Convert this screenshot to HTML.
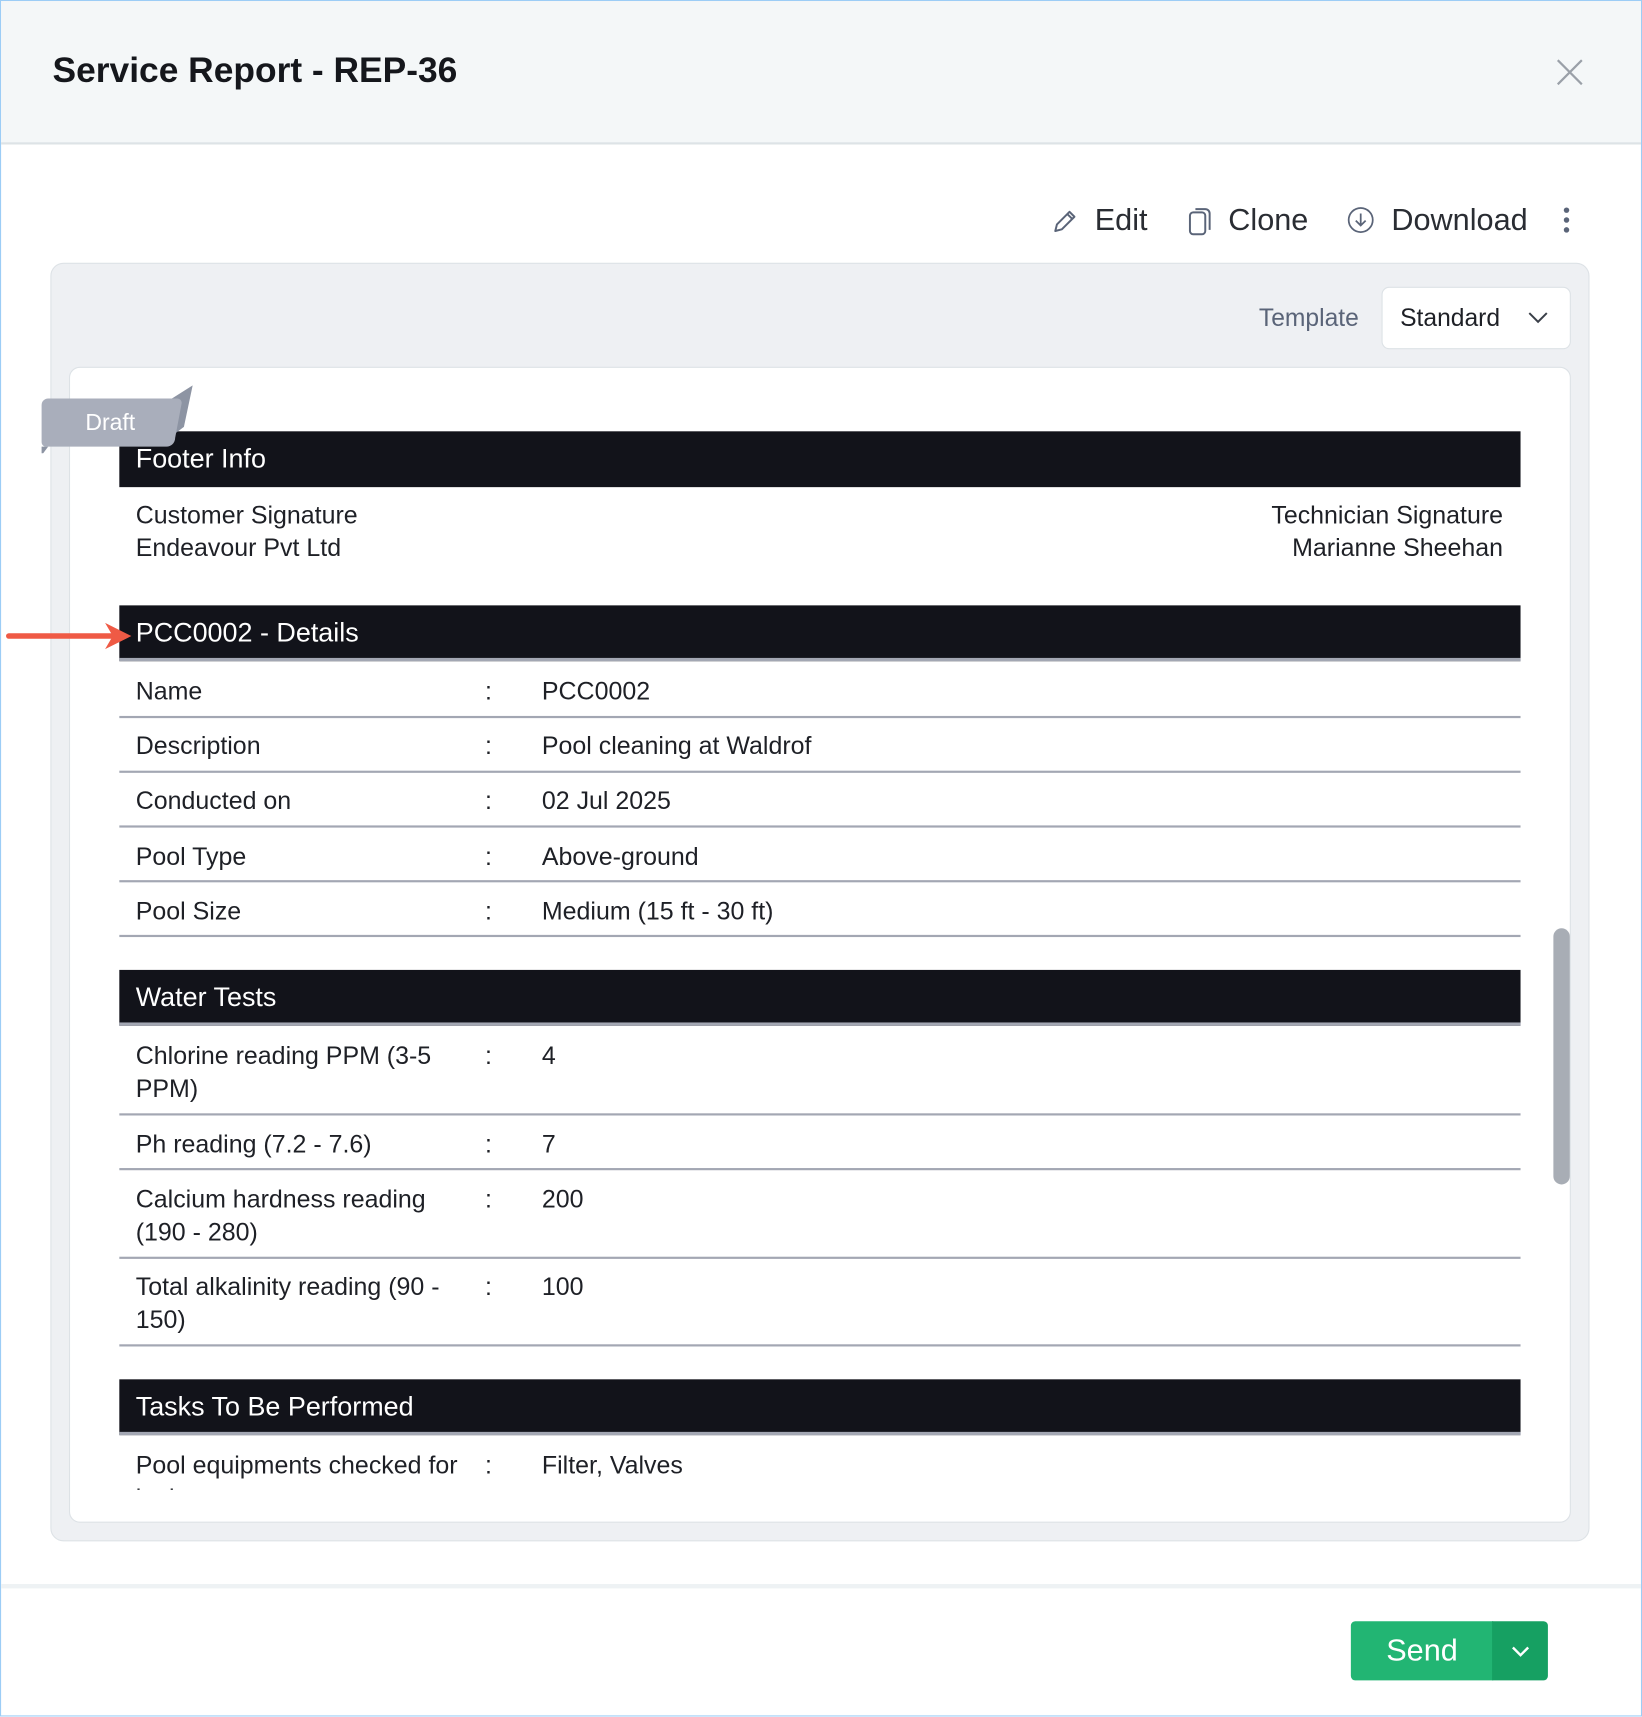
<!DOCTYPE html>
<html><head><meta charset="utf-8"><style>
html,body{margin:0;padding:0;width:1642px;height:1716px;overflow:hidden;background:#fff;font-family:"Liberation Sans",sans-serif;}
#s{position:absolute;left:0;top:0;width:1500px;height:1568px;transform:scale(1.0947);transform-origin:0 0;}
.a{position:absolute;}
.frame{left:0;top:0;width:1498px;height:1566px;border:1px solid #9ccdf6;}
.hdr{left:1px;top:1px;width:1498px;height:129px;background:#f4f7f8;border-bottom:2px solid #dde3e6;}
.title{left:48px;top:46px;font-size:32.3px;font-weight:bold;color:#15171c;}
.act{top:185px;font-size:28px;color:#2a2d33;}
.panel{left:46px;top:240px;width:1404px;height:1166px;background:#eef0f3;border:1px solid #dde2e6;border-radius:12px;}
.card{left:63px;top:335px;width:1370px;height:1054px;background:#fff;border:1px solid #dde2e6;border-radius:10px;}
.clip{left:64px;top:336px;width:1370px;height:1025px;overflow:hidden;}
.bar{position:absolute;left:45px;width:1280px;height:51px;background:#12131a;color:#fff;font-size:24.6px;line-height:51px;text-indent:15px;border-bottom:3px solid #a3a7b3;box-sizing:border-box;}
.t{position:absolute;font-size:22.8px;color:#1e2026;line-height:30px;}
.ln{position:absolute;left:45px;width:1280px;height:2px;background:#a3a7b3;}
</style></head><body><div id="s">
<div class="a frame"></div>
<div class="a hdr"></div>
<div class="a title">Service Report - REP-36</div>
<svg class="a" style="left:1420px;top:52px" width="28" height="28" viewBox="0 0 28 28"><path d="M3 3L25 25M25 3L3 25" stroke="#9aa0a8" stroke-width="2"/></svg>

<svg class="a" style="left:960px;top:189px" width="26" height="26" viewBox="0 0 26 26"><path d="M4 22l1.5-6L17 4.5l4.5 4.5L10 20.5z M15 6.5l4.5 4.5" fill="none" stroke="#5a6478" stroke-width="1.8" stroke-linejoin="round"/></svg>
<div class="a act" style="left:1000px">Edit</div>
<svg class="a" style="left:1084px;top:187px" width="26" height="30" viewBox="0 0 26 30"><rect x="3" y="7" width="14" height="20" rx="3" fill="none" stroke="#5a6478" stroke-width="1.8"/><path d="M8 4h9a4 4 0 0 1 4 4v15" fill="none" stroke="#5a6478" stroke-width="1.8"/></svg>
<div class="a act" style="left:1122px">Clone</div>
<svg class="a" style="left:1230px;top:188px" width="26" height="26" viewBox="0 0 26 26"><circle cx="13" cy="13" r="11" fill="none" stroke="#5a6478" stroke-width="1.6"/><path d="M13 7v11M8.5 13.5L13 18l4.5-4.5" fill="none" stroke="#5a6478" stroke-width="1.6"/></svg>
<div class="a act" style="left:1271px">Download</div>
<svg class="a" style="left:1425px;top:188px" width="12" height="28"><circle cx="6" cy="4" r="2.5" fill="#5a6478"/><circle cx="6" cy="13" r="2.5" fill="#5a6478"/><circle cx="6" cy="22" r="2.5" fill="#5a6478"/></svg>

<div class="a panel"></div>
<div class="a" style="left:1150px;top:278px;font-size:22.5px;color:#5a6478">Template</div>
<div class="a" style="left:1262px;top:262px;width:171px;height:55px;background:#fff;border:1px solid #dde2e6;border-radius:7px;"></div>
<div class="a" style="left:1279px;top:278px;font-size:22.5px;color:#1e2026">Standard</div>
<svg class="a" style="left:1395px;top:283px" width="20" height="14"><path d="M2 3l8 8 8-8" fill="none" stroke="#3a3f48" stroke-width="1.8"/></svg>

<div class="a card"></div>
<div class="a clip">
 <div class="bar" style="top:58px;border-bottom:none">Footer Info</div>
 <div class="t" style="left:60px;top:119px">Customer Signature<br>Endeavour Pvt Ltd</div>
 <div class="t" style="right:61px;top:119px;text-align:right">Technician Signature<br>Marianne Sheehan</div>

 <div class="bar" style="top:217px">PCC0002 - Details</div>
 <div class="t" style="left:60px;top:280px">Name</div><div class="t" style="left:379px;top:280px">:</div><div class="t" style="left:431px;top:280px">PCC0002</div><div class="ln" style="top:318px"></div>
 <div class="t" style="left:60px;top:330px">Description</div><div class="t" style="left:379px;top:330px">:</div><div class="t" style="left:431px;top:330px">Pool cleaning at Waldrof</div><div class="ln" style="top:368px"></div>
 <div class="t" style="left:60px;top:380px">Conducted on</div><div class="t" style="left:379px;top:380px">:</div><div class="t" style="left:431px;top:380px">02 Jul 2025</div><div class="ln" style="top:418px"></div>
 <div class="t" style="left:60px;top:431px">Pool Type</div><div class="t" style="left:379px;top:431px">:</div><div class="t" style="left:431px;top:431px">Above-ground</div><div class="ln" style="top:468px"></div>
 <div class="t" style="left:60px;top:481px">Pool Size</div><div class="t" style="left:379px;top:481px">:</div><div class="t" style="left:431px;top:481px">Medium (15 ft - 30 ft)</div><div class="ln" style="top:518px"></div>

 <div class="bar" style="top:550px">Water Tests</div>
 <div class="t" style="left:60px;top:613px">Chlorine reading PPM (3-5<br>PPM)</div><div class="t" style="left:379px;top:613px">:</div><div class="t" style="left:431px;top:613px">4</div><div class="ln" style="top:681px"></div>
 <div class="t" style="left:60px;top:694px">Ph reading (7.2 - 7.6)</div><div class="t" style="left:379px;top:694px">:</div><div class="t" style="left:431px;top:694px">7</div><div class="ln" style="top:731px"></div>
 <div class="t" style="left:60px;top:744px">Calcium hardness reading<br>(190 - 280)</div><div class="t" style="left:379px;top:744px">:</div><div class="t" style="left:431px;top:744px">200</div><div class="ln" style="top:812px"></div>
 <div class="t" style="left:60px;top:824px">Total alkalinity reading (90 -<br>150)</div><div class="t" style="left:379px;top:824px">:</div><div class="t" style="left:431px;top:824px">100</div><div class="ln" style="top:892px"></div>

 <div class="bar" style="top:924px">Tasks To Be Performed</div>
 <div class="t" style="left:60px;top:987px">Pool equipments checked for<br>leaks</div><div class="t" style="left:379px;top:987px">:</div><div class="t" style="left:431px;top:987px">Filter, Valves</div>
</div>
<div class="a" style="left:1419px;top:848px;width:15px;height:234px;background:#a8adb5;border-radius:8px"></div>

<svg class="a" style="left:36px;top:350px" width="145" height="64" viewBox="0 0 145 64"><path d="M118 16L140 2L132 40L116 52z" fill="#8d94a3"/><path d="M2 58L2 66L8 58z" fill="#8d94a3"/><path d="M8 14H126a4 4 0 0 1 4 4L124 50a8 8 0 0 1-8 8H6a4 4 0 0 1-4-4V20a6 6 0 0 1 6-6z" fill="#a9aebb"/><text x="42" y="43" font-family="Liberation Sans,sans-serif" font-size="21" fill="#fff">Draft</text></svg>

<svg class="a" style="left:4px;top:566px" width="118" height="30"><path d="M4 15H100" stroke="#ef5a45" stroke-width="5" stroke-linecap="round"/><path d="M92 3L116 15L92 27L99 15z" fill="#ef5a45"/></svg>

<div class="a" style="left:1px;top:1447px;width:1498px;height:4px;background:#eef2f4"></div>
<div class="a" style="left:1234px;top:1481px;width:130px;height:54px;background:#22b573;border-radius:4px 0 0 4px;color:#fff;font-size:28px;line-height:54px;text-align:center">Send</div>
<div class="a" style="left:1363px;top:1481px;width:51px;height:54px;background:#16a062;border-radius:0 4px 4px 0"></div>
<svg class="a" style="left:1379px;top:1502px" width="20" height="14"><path d="M3 3l7 7 7-7" fill="none" stroke="#fff" stroke-width="2.2"/></svg>
</div></body></html>
